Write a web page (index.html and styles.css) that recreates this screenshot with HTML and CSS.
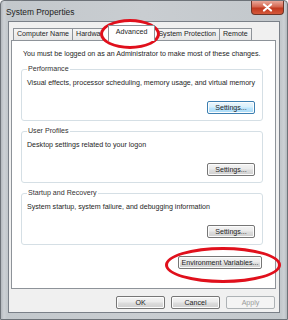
FILE: index.html
```html
<!DOCTYPE html>
<html lang="en">
<head>
  <meta charset="UTF-8" />
  <title>System Properties</title>
  <link rel="stylesheet" href="styles.css">
</head>
<body>
  <div class="window">
    <div class="titlebar">
      <span class="title">System Properties</span>
      <div class="close">
        <svg width="11" height="9" viewBox="0 0 11 9">
          <path d="M2 1.5 L9 7.5 M9 1.5 L2 7.5" stroke="#fff" stroke-width="2.2" stroke-linecap="round" />
        </svg>
      </div>
    </div>

    <div class="dialog">
      <div class="tabs">
        <div class="tab">Computer Name</div>
        <div class="tab">Hardware</div>
        <div class="tab selected">Advanced</div>
        <div class="tab">System Protection</div>
        <div class="tab">Remote</div>
      </div>

      <div class="panel">
        <div class="intro">You must be logged on as an Administrator to make most of these changes.</div>

        <fieldset class="group">
          <legend>Performance</legend>
          <div class="desc">Visual effects, processor scheduling, memory usage, and virtual memory</div>
          <div class="group-actions">
            <button class="btn focused">Settings...</button>
          </div>
        </fieldset>

        <fieldset class="group">
          <legend>User Profiles</legend>
          <div class="desc">Desktop settings related to your logon</div>
          <div class="group-actions">
            <button class="btn">Settings...</button>
          </div>
        </fieldset>

        <fieldset class="group">
          <legend>Startup and Recovery</legend>
          <div class="desc">System startup, system failure, and debugging information</div>
          <div class="group-actions">
            <button class="btn">Settings...</button>
          </div>
        </fieldset>

        <div class="env-row">
          <button class="btn env">Environment Variables...</button>
        </div>
      </div>

      <div class="footer">
        <button class="btn">OK</button>
        <button class="btn">Cancel</button>
        <button class="btn" disabled>Apply</button>
      </div>
    </div>

    <!-- hand-drawn red circles over the screenshot -->
    <span class="mark mark-tab"></span>
    <span class="mark mark-env"></span>
  </div>
</body>
</html>
```

FILE: styles.css
```css
body {
  margin: 0;
  font-family: "Liberation Sans", Arial, sans-serif;
  font-size: 7.1px;
  color: #1e1e1e;
}

.window {
  position: relative;
  width: 288px;
  height: 320px;
  box-sizing: border-box;
  padding: 0 7px 6px 7px;
  display: flex;
  flex-direction: column;
  background: linear-gradient(to right, #b4b9be 0px, #cdd1d5 3px, #c3c8cc 6px, #c9cdd1 50%, #c3c8cc calc(100% - 6px), #cdd1d5 calc(100% - 3px), #b4b9be 100%);
  border: 1px solid #6d7278;
  border-radius: 4px 4px 0 0;
}

.titlebar {
  height: 20px;
  display: flex;
  justify-content: space-between;
  align-items: flex-start;
}

.title {
  font-size: 8.4px;
  color: #222;
  margin-top: 6px;
  margin-left: -2px;
}

.close {
  width: 31px;
  height: 13px;
  margin-right: -4px;
  display: flex;
  align-items: center;
  justify-content: center;
  background: linear-gradient(#e9a89a, #d4664f 45%, #c0391f 55%, #d5583a);
  border: 1px solid #6e3528;
  border-top: none;
  border-radius: 0 0 4px 4px;
}

.dialog {
  flex: 1;
  display: flex;
  flex-direction: column;
  background: #f0f0f0;
  border: 1px solid #7a8088;
  padding: 0 3px 3px 2px;
}

.tabs {
  display: flex;
  align-items: flex-end;
  height: 18px;
  padding-left: 2px;
}

.tab {
  height: 11px;
  line-height: 11px;
  padding: 0 3px;
  margin-right: -1px;
  border: 1px solid #8e9399;
  border-bottom: none;
  background: linear-gradient(#f6f6f6, #e6e6e6);
  white-space: nowrap;
}

.tab.selected {
  position: relative;
  z-index: 3;
  height: 15px;
  margin: 0 -1px -1px -2px;
  padding: 0 7px;
  background: #fff;
  line-height: 13px;
}

.panel {
  flex: 1;
  background: #fff;
  border: 1px solid #8e9399;
  padding: 8px 12px 0 9px;
}

.intro {
  line-height: 10px;
  padding-left: 2px;
  white-space: nowrap;
}

.group {
  margin: 5px 0 0 0;
  padding: 0 7px 6px 5px;
  border: 1px solid #d5dfe5;
  border-radius: 3px;
  min-width: 0;
}

.group legend {
  padding: 0 1px;
  line-height: 10px;
  color: #333;
}

.desc {
  margin-top: 4px;
  line-height: 10px;
  white-space: nowrap;
}

.group-actions {
  display: flex;
  justify-content: flex-end;
  margin-top: 13px;
}

.btn {
  font-family: inherit;
  font-size: 7.1px;
  color: #1e1e1e;
  height: 13px;
  width: 48px;
  padding: 0;
  border: 1px solid #767676;
  border-radius: 2px;
  background: linear-gradient(#f3f3f3, #ebebeb 45%, #dddddd 55%, #cfcfcf);
  box-shadow: inset 0 0 0 1px #fcfcfc;
}

.btn.focused {
  border-color: #3c7fb1;
  background: linear-gradient(#eaf6fd, #d9f0fc 45%, #bee6fd 55%, #a7d9f5);
}

.btn:disabled {
  color: #9a9a9a;
  border-color: #adb2b5;
  background: #f4f4f4;
  box-shadow: none;
}

.env-row {
  display: flex;
  justify-content: flex-end;
  margin-top: 11px;
  padding-right: 1px;
}

.btn.env {
  width: 84px;
}

.footer {
  display: flex;
  justify-content: flex-end;
  gap: 6px;
  margin-top: 7px;
  padding-right: 1px;
}

.footer .btn {
  width: 49px;
}

.mark {
  position: absolute;
  box-sizing: border-box;
  border: 3px solid #e0101c;
  border-radius: 50%;
}

.mark-tab {
  z-index: 2;
  left: 99px;
  top: 18px;
  width: 60px;
  height: 30px;
  background: #fff;
}

.mark-env {
  left: 164px;
  top: 246px;
  width: 116px;
  height: 36px;
}
```
